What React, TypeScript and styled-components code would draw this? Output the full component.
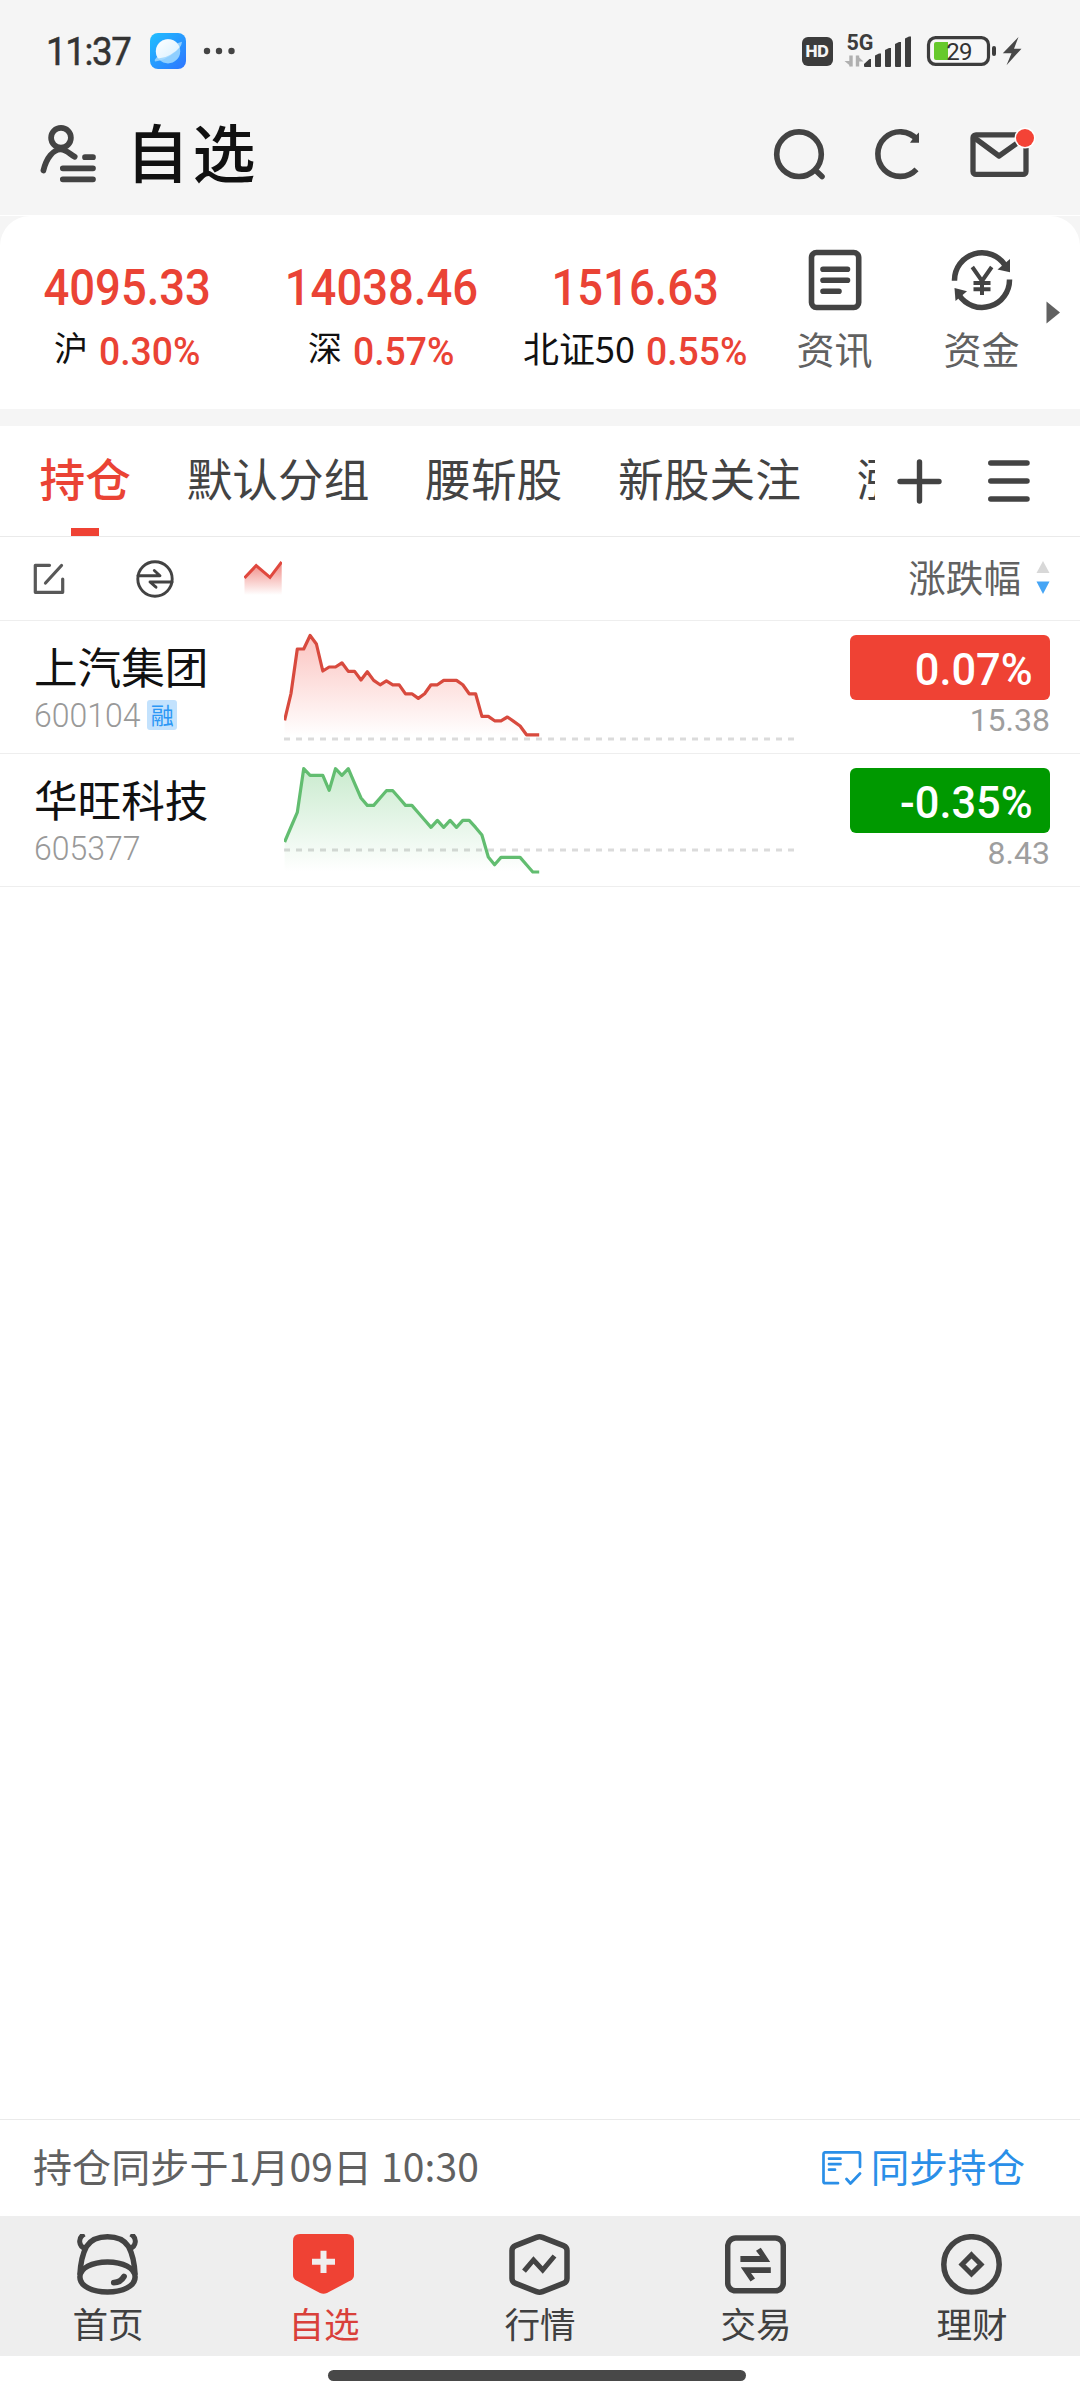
import React from 'react';
import styled, { createGlobalStyle } from 'styled-components';

const RED = '#ea4335';
const INK = '#434343';

const Global = createGlobalStyle`
  html, body { margin: 0; padding: 0; background: #fff; }
  *, *::before, *::after { box-sizing: border-box; }
  svg { display: block; flex: none; }
`;

const zh = `'Noto Sans CJK SC', sans-serif`;
const din = `Roboto, 'Noto Sans CJK SC', sans-serif`;

const Screen = styled.div`
  width: 1080px;
  height: 2400px;
  display: flex;
  flex-direction: column;
  background: #fff;
  overflow: hidden;
  font-family: ${zh};
  color: #111;
  white-space: nowrap;
`;

const Num = styled.span<{ $size: number; $scale?: number; $weight?: number; $origin?: string }>`
  display: inline-block;
  font-family: ${din};
  font-size: ${p => p.$size}px;
  font-weight: ${p => p.$weight ?? 500};
  transform: scaleX(${p => p.$scale ?? 1});
  transform-origin: ${p => p.$origin ?? 'center'};
`;

/* ---------- status bar ---------- */

const StatusBar = styled.div`
  height: 102px;
  flex: none;
  display: flex;
  align-items: center;
  justify-content: space-between;
  padding: 0 56.5px 0 46px;
  background: #f5f5f5;
`;

const StatusLeft = styled.div`
  display: flex;
  align-items: center;
`;

const Clock = styled.div`
  width: 104px;
  font: 400 39.5px/50px ${din};
  letter-spacing: -1.5px;
  color: #333;
  -webkit-text-stroke: 0.5px #333;
  padding-top: 1px;
  span { display: inline-block; transform: scaleX(0.93); transform-origin: left; }
`;

const HdBadge = styled.div`
  width: 31px;
  height: 29px;
  border-radius: 6px;
  background: #3c3c3c;
  color: #f5f5f5;
  display: flex;
  align-items: center;
  justify-content: center;
  font: 800 16px/29px Inter, sans-serif;
  letter-spacing: -0.3px;
`;

const StatusRight = styled.div`
  display: flex;
  align-items: center;
`;

/* ---------- header ---------- */

const Header = styled.header`
  height: 113px;
  flex: none;
  display: flex;
  align-items: center;
  padding: 0 40px 9px;
  background: #f5f5f5;
`;

const Title = styled.h1`
  flex: 1;
  margin: 0 0 8px 28px;
  font: 500 63px/90px ${zh};
  letter-spacing: 3.5px;
`;

const HeaderActions = styled.div`
  display: flex;
  align-items: center;
`;

/* ---------- index card ---------- */

const CardArea = styled.section`
  flex: none;
  border-top: 1px solid #fff;
  background: #f5f5f5;
  padding-bottom: 17px;
`;

const Card = styled.div`
  height: 193px;
  border-radius: 30px 30px 0 0;
  background: #fff;
  display: flex;
`;

const IndexCell = styled.div`
  width: 254px;
  padding-top: 47px;
  display: flex;
  flex-direction: column;
  align-items: center;
  color: ${RED};
`;

const IndexValue = styled.div`
  height: 50px;
  line-height: 50px;
`;

const IndexMeta = styled.div`
  height: 40px;
  margin-top: 19px;
  padding-left: 1px;
  display: flex;
  align-items: center;
  gap: 9.5px;
  line-height: 40px;
`;

const IndexName = styled.span<{ $size?: number }>`
  font-size: ${p => p.$size ?? 34}px;
  color: #111;
  margin-bottom: 11px;
`;

const QuickLink = styled.div`
  width: 147px;
  padding: 33px 2px 0 0;
  display: flex;
  flex-direction: column;
  align-items: center;
  font-size: 38px;
  line-height: 40px;
  color: #616161;
  gap: 17px;
`;

const MoreArrow = styled.div`
  margin: 85px 0 0 -10px;
`;

/* ---------- tabs ---------- */

const TabBar = styled.nav`
  height: 111px;
  flex: none;
  border-bottom: 1px solid #eaeaea;
  display: flex;
`;

const TabStrip = styled.div`
  width: 875px;
  flex: none;
  display: flex;
  gap: 55.8px;
  padding-left: 39.5px;
  overflow: hidden;
`;

const Tab = styled.div<{ $active?: boolean }>`
  flex: none;
  display: flex;
  flex-direction: column;
  align-items: center;
  font-size: 45.7px;
  font-weight: ${p => (p.$active ? 500 : 400)};
  line-height: 102px;
  color: ${p => (p.$active ? RED : INK)};
  &::after {
    content: '';
    width: 28px;
    height: 8px;
    background: ${p => (p.$active ? '#ef4234' : 'transparent')};
  }
`;

const TabTools = styled.div`
  display: flex;
  align-items: center;
  gap: 46px;
  padding-left: 22px;
`;

/* ---------- toolbar ---------- */

const Toolbar = styled.div`
  height: 84px;
  flex: none;
  border-bottom: 1px solid #eee;
  display: flex;
  align-items: center;
  padding: 0 30px 0 33px;
`;

const SortLabel = styled.div`
  margin: 0 15px 6px auto;
  font-size: 37.6px;
  line-height: 50px;
  color: #616161;
`;

/* ---------- stock rows ---------- */

const StockRow = styled.div`
  height: 133px;
  flex: none;
  border-bottom: 1px solid #eee;
  display: flex;
`;

const StockInfo = styled.div`
  width: 284px;
  padding: 17px 0 0 34px;
`;

const StockName = styled.div`
  font-size: 43.6px;
  line-height: 54px;
`;

const StockCode = styled.div`
  display: flex;
  align-items: center;
  height: 30px;
  line-height: 30px;
  margin-top: 8px;
  color: #999;
`;

const MarginTag = styled.span`
  width: 30px;
  height: 30px;
  border-radius: 3px;
  background: #c3e2fd;
  color: #2b97f5;
  font-size: 23px;
  line-height: 28px;
  text-align: center;
`;

const ChartCell = styled.div`
  width: 566px;
`;

const QuoteCell = styled.div`
  width: 200px;
  padding-top: 14px;
`;

const ChangeChip = styled.div<{ $down?: boolean }>`
  height: 65px;
  border-radius: 6px;
  background: ${p => (p.$down ? '#009900' : '#ef4234')};
  color: #fff;
  text-align: right;
  padding-right: 17px;
  line-height: 71px;
`;

const Price = styled.div`
  margin-top: 5px;
  text-align: right;
  line-height: 30px;
  color: #9e9e9e;
`;

const Blank = styled.div`
  flex: 1;
`;

/* ---------- sync bar & bottom navigation ---------- */

const SyncBar = styled.div`
  height: 97px;
  flex: none;
  border-top: 1px solid #eaeaea;
  display: flex;
  align-items: center;
  justify-content: space-between;
  padding: 0 55px 0 33px;
  font-size: 39px;
  line-height: 60px;
  color: #616161;
`;

const SyncText = styled.span<{ $spacing?: number }>`
  margin-bottom: 6px;
  letter-spacing: ${p => p.$spacing ?? 0}px;
`;

const SyncLink = styled.div`
  display: flex;
  align-items: center;
  gap: 9px;
  font-size: 38.6px;
  color: #2a8fe8;
`;

const BottomNav = styled.nav`
  height: 140px;
  flex: none;
  display: flex;
  background: #eee;
`;

const NavItem = styled.div<{ $active?: boolean }>`
  flex: 1;
  padding-top: 18px;
  display: flex;
  flex-direction: column;
  align-items: center;
  gap: 7px;
  font-size: 35.6px;
  line-height: 42px;
  color: ${p => (p.$active ? '#d9403a' : '#404040')};
  svg { margin-right: 1.6px; }
`;

const GestureArea = styled.div`
  height: 44px;
  flex: none;
  display: flex;
  justify-content: center;
  padding-top: 14px;
`;

const GestureBar = styled.div`
  width: 418px;
  height: 11px;
  margin-right: 6px;
  border-radius: 6px;
  background: #484848;
`;

/* ---------- data ---------- */

const indices = [
  { value: '4095.33', name: '沪', pct: '0.30%', size: 34 },
  { value: '14038.46', name: '深', pct: '0.57%', size: 34 },
  { value: '1516.63', name: '北证50', pct: '0.55%', size: 36 },
];

const tabs = ['持仓', '默认分组', '腰斩股', '新股关注', '涨'];

const stocks = [
  {
    id: 'a', name: '上汽集团', code: '600104', tag: '融', pct: '0.07%', price: '15.38', down: false,
    line: '#d84a3e', fill: '#f9a09a', base: 118, bottom: 115,
    pts: [99.3, 72.5, 28, 28, 14.5, 23, 50, 46, 46, 41.8, 50.4, 50.4, 59, 50.8, 59.4, 63.8, 59.8, 63.8, 63.8, 72.8, 72.8, 77.4, 72.8, 63.8, 63.8, 59.4, 59.4, 59.4, 63.8, 72.8, 72.8, 95.4, 95.4, 99.8, 99.8, 96, 100.4, 105, 113.8, 113.8, 113.8],
  },
  {
    id: 'b', name: '华旺科技', code: '605377', tag: '', pct: '-0.35%', price: '8.43', down: true,
    line: '#62bd70', fill: '#aadfb2', base: 96, bottom: 118,
    pts: [88, 73, 58.4, 14.7, 21.4, 21.4, 21.4, 36.4, 14.7, 21.4, 14.7, 29.4, 44, 51.4, 51.4, 44, 36.7, 36.7, 44, 51.4, 51.4, 58.7, 66, 73.4, 66.4, 73.4, 66.4, 73.4, 66.4, 66.4, 73.4, 81, 103, 110.7, 103.4, 103.4, 103.4, 103.4, 110.7, 118, 118],
  },
];

type Stock = (typeof stocks)[number];

/* ---------- drawings ---------- */

const Sparkline = ({ s }: { s: Stock }) => {
  const pts = s.pts.map((y, i) => `${(0.6 + i * 6.365).toFixed(1)},${y}`).join(' ');
  return (
    <svg width="512" height="132" viewBox="0 0 512 132">
      <defs>
        <linearGradient id={`g-${s.id}`} gradientUnits="userSpaceOnUse" x1="0" y1="10" x2="0" y2={s.bottom}>
          <stop offset="0" stopColor={s.fill} stopOpacity="0.65" />
          <stop offset="1" stopColor={s.fill} stopOpacity="0" />
        </linearGradient>
      </defs>
      <path d={`M0.6 ${s.bottom} L${pts} L255 ${s.bottom} Z`} fill={`url(#g-${s.id})`} />
      <path d={`M0 ${s.base} H510`} stroke="#000" strokeOpacity="0.14" strokeWidth="3.2" strokeDasharray="6 6" />
      <polyline points={pts} fill="none" stroke={s.line} strokeWidth="3.2" strokeLinejoin="round" />
    </svg>
  );
};

const BrowserIcon = () => (
  <svg width="36" height="36" viewBox="0 0 36 36">
    <defs>
      <linearGradient id="appbg" x1="0" y1="0" x2="1" y2="1">
        <stop offset="0" stopColor="#20c0ff" />
        <stop offset="1" stopColor="#2e74ff" />
      </linearGradient>
      <linearGradient id="planet" x1="0" y1="0" x2="1" y2="1">
        <stop offset="0" stopColor="#fff" />
        <stop offset="1" stopColor="#d8f0ff" />
      </linearGradient>
    </defs>
    <rect width="36" height="36" rx="8" fill="url(#appbg)" />
    <circle cx="18" cy="18.200" r="12.200" fill="#8fcfff" />
    <path d="M6.500 24.500L28 10L32 8.800Q31.500 14.500 24.500 19.500Q15 27.500 5 28.500Q4.300 26.500 6.500 24.500Z" fill="#a9dcff" opacity="0.8" />
    <path d="M8 25.200A12.200 12.200 0 1 1 29.600 14.300Q26.500 18.500 20 22Q13.500 25.800 8 25.200Z" fill="url(#planet)" />
  </svg>
);

const MoreDots = () => (
  <svg width="34" height="10" viewBox="0 0 34 10" style={{ marginLeft: 16 }}>
    <circle cx="5" cy="5" r="3.200" fill="#444" />
    <circle cx="17" cy="5" r="3.200" fill="#444" />
    <circle cx="29.500" cy="5" r="3.200" fill="#444" />
  </svg>
);

const SignalIcon = () => (
  <svg width="80" height="36" viewBox="0 0 80 36">
    <text x="13.500" y="17" fontFamily="Roboto, sans-serif" fontWeight="700" fontSize="21.500" fill="#3d3d3d">5G</text>
    <path d="M18 22.500V33.500M24.500 22.500V33.500" stroke="#b0b0b0" strokeWidth="3.400" />
    <path d="M11.500 28H18V33.500ZM30.500 28.500H24V22.500Z" fill="#b0b0b0" />
    <g fill="#3d3d3d">
      <path d="M31 33V31L36.500 26H38V34H32Q31 34 31 33Z" />
      <path d="M42 33V22.500L46 20.500H48V33Q48 34 47 34H43Q42 34 42 33Z" />
      <path d="M52 33V17L56 15H58V33Q58 34 57 34H53Q52 34 52 33Z" />
      <path d="M62 33V11L66 9H68V33Q68 34 67 34H63Q62 34 62 33Z" />
      <path d="M72 33V5.500L76 3.500H78V33Q78 34 77 34H73Q72 34 72 33Z" />
    </g>
  </svg>
);

const BatteryIcon = () => (
  <svg width="98" height="32" viewBox="0 0 98 32" style={{ marginLeft: 13 }}>
    <rect x="2.500" y="2.700" width="60" height="26.600" rx="7" fill="#f7f7f7" stroke="#3d3d3d" strokeWidth="3.200" />
    <path d="M10 7H22V25H10Q8 25 8 23V9Q8 7 10 7Z" fill="#66c92c" />
    <text x="33" y="25" textAnchor="middle" fontFamily="Roboto, sans-serif" fontSize="24" letterSpacing="-0.8" fill="#333">29</text>
    <rect x="66" y="11" width="4" height="10" rx="2" fill="#3d3d3d" />
    <path d="M92.500 2L76.800 18.300H85.500L80.500 30.300L95.500 13.700H88Z" fill="#484848" />
  </svg>
);

const ProfileIcon = () => (
  <svg width="58" height="62" viewBox="0 0 58 62" fill="none" stroke={INK} strokeWidth="5.700" strokeLinecap="round" strokeLinejoin="round">
    <circle cx="21" cy="14.800" r="9.900" />
    <path d="M3.400 47.500C6.500 34.500 13.500 26.500 20.500 26.500C26 26.500 28.500 30 34.700 33.800" />
    <path d="M45 34.200H53M22.800 45.300H53M22.800 56.300H53" />
  </svg>
);

const SearchIcon = () => (
  <svg width="54" height="54" viewBox="0 0 54 54" fill="none" stroke={INK} strokeWidth="5.600" strokeLinecap="round">
    <circle cx="27" cy="27.200" r="22.300" />
    <path d="M44 43.800L50 49.500" />
  </svg>
);

const RefreshIcon = () => (
  <svg width="54" height="54" viewBox="0 0 54 54" style={{ marginLeft: 47 }}>
    <path d="M44 12.500A22.300 22.300 0 1 0 43.500 42.300" fill="none" stroke={INK} strokeWidth="5.600" />
    <path d="M46 5.500V15.700H37L41 10Z" fill={INK} />
  </svg>
);

const MailIcon = () => (
  <svg width="72" height="54" viewBox="0 0 72 54" style={{ marginLeft: 41 }}>
    <g fill="none" stroke={INK} strokeWidth="5.300" strokeLinejoin="round">
      <rect x="5" y="7.800" width="53" height="39.600" rx="3" />
      <path d="M6 10.500L31 29L57 10.500" />
    </g>
    <circle cx="57" cy="11" r="10.500" fill="#fff" />
    <circle cx="57" cy="11" r="9" fill="#f44336" />
  </svg>
);

const NewsIcon = () => (
  <svg width="62" height="62" viewBox="0 0 62 62" fill="none" stroke={INK} strokeWidth="5.600" strokeLinecap="round">
    <rect x="7.500" y="3.500" width="47.200" height="55" rx="5" />
    <path d="M19 20.300H43.500M19 31.300H43.500M19 42.300H35" />
  </svg>
);

const FundIcon = () => (
  <svg width="62" height="62" viewBox="0 0 62 62">
    <g fill="none" stroke={INK} strokeWidth="5.500">
      <path d="M3.500 31.800A27.500 27.500 0 0 1 54.500 17" />
      <path d="M58.500 30.500A27.500 27.500 0 0 1 8 46" />
    </g>
    <path d="M59 10V23.300L46.500 20.500Z" fill={INK} />
    <path d="M3.500 39L16 42.300L4.500 52Z" fill={INK} />
    <path d="M21.300 18L31 32L40.700 18M31 31V46M22.500 34H39.500M22.500 40.200H39.500" fill="none" stroke={INK} strokeWidth="4" />
  </svg>
);

const EditIcon = () => (
  <svg width="32" height="32" viewBox="0 0 32 32" fill="none" stroke="#585858" strokeWidth="3.200" strokeLinecap="round" strokeLinejoin="round">
    <path d="M16.500 2.300H2.300V29.300H29.700V16M28.500 2.500L12.500 20" />
  </svg>
);

const SwapIcon = () => (
  <svg width="38" height="38" viewBox="0 0 38 38" style={{ marginLeft: 71 }} fill="none" stroke={INK} strokeWidth="2.900" strokeLinejoin="round" strokeLinecap="round">
    <circle cx="19" cy="19" r="17.200" />
    <path d="M2 15.700H24L18.300 10.500M36 22H14L20 27.200" />
  </svg>
);

const TrendIcon = () => (
  <svg width="38" height="36" viewBox="0 0 38 36" style={{ marginLeft: 70 }}>
    <defs>
      <linearGradient id="trend" x1="0" y1="0" x2="0" y2="1">
        <stop offset="0" stopColor="#f08680" />
        <stop offset="1" stopColor="#f08680" stopOpacity="0" />
      </linearGradient>
    </defs>
    <path d="M0.500 17L12.200 4.500L26 16.300L37.700 1V34H0.500Z" fill="url(#trend)" />
    <path d="M0.500 17L12.200 4.500L26 16.300L37.700 1" fill="none" stroke="#e0483e" strokeWidth="3" />
  </svg>
);

const navIcons = [
  <g key="home" fill="none" stroke={INK} strokeWidth="5.500">
    <path d="M7.300 0C0.500 4 1.500 12.500 8.500 14.700M53.700 0C60.500 4 59.500 12.500 52.500 14.700" strokeWidth="5" />
    <path d="M2.900 41C3.500 28 6.500 18 9.500 12.500C18 -0.400 43 -0.400 51.500 12.500C54.500 18 57.500 28 58.100 41" />
    <path d="M2.900 43C2.900 34 15 27.900 30.500 27.900S58.100 34 58.100 43C58.100 52 46 58 30.500 58S2.900 52 2.900 43Z" />
    <path d="M36.800 48.600Q43.500 48.600 47 42.500" strokeWidth="5.800" strokeLinecap="round" />
  </g>,
  <g key="watch">
    <path d="M7 0H54Q61 0 61 7V41Q61 44.500 58 46.300L34 59Q30.500 60.600 27 59L3 46.300Q0 44.500 0 41V7Q0 0 7 0Z" fill="#ef4234" />
    <path d="M30.500 16.700V39M19 27.800H42" stroke="#f0eeee" strokeWidth="6" />
  </g>,
  <g key="market" fill="none" stroke={INK} strokeWidth="5.500" strokeLinejoin="round">
    <path d="M27.500 3.400Q30.500 2.200 33.500 3.400L54.500 11.600Q58 13 58 16.500V44.500Q58 48 54.500 49.400L33.500 57.600Q30.500 58.800 27.500 57.600L6.500 49.400Q3 48 3 44.500V16.500Q3 13 6.500 11.600Z" />
    <path d="M15 37.200L24.500 26L33.700 36L45.500 22" strokeWidth="5" strokeLinejoin="miter" />
  </g>,
  <g key="trade">
    <rect x="2.700" y="4" width="55.600" height="52.800" rx="8" fill="none" stroke={INK} strokeWidth="5.500" />
    <path d="M15.400 22H35L31 16.700L35.800 13.700L45.200 28H15.400ZM45.800 39H26L30 44.500L25.500 47.500L15.800 33.300H45.800Z" fill={INK} />
  </g>,
  <g key="wealth" fill="none" stroke={INK}>
    <circle cx="30.500" cy="30.400" r="27.700" strokeWidth="5.500" />
    <path d="M30.500 20.900L40 30.400L30.500 39.900L21 30.400Z" strokeWidth="5" />
  </g>,
];

const navLabels = ['首页', '自选', '行情', '交易', '理财'];

/* ---------- page ---------- */

export default function App() {
  return (
    <Screen>
      <Global />
      <StatusBar>
        <StatusLeft>
          <Clock><span>11:37</span></Clock>
          <BrowserIcon />
          <MoreDots />
        </StatusLeft>
        <StatusRight>
          <HdBadge>HD</HdBadge>
          <SignalIcon />
          <BatteryIcon />
        </StatusRight>
      </StatusBar>

      <Header>
        <ProfileIcon />
        <Title>自选</Title>
        <HeaderActions>
          <SearchIcon />
          <RefreshIcon />
          <MailIcon />
        </HeaderActions>
      </Header>

      <CardArea>
        <Card>
          {indices.map(it => (
            <IndexCell key={it.name}>
              <IndexValue><Num $size={50} $scale={0.908}>{it.value}</Num></IndexValue>
              <IndexMeta>
                <IndexName $size={it.size}>{it.name}</IndexName>
                <Num $size={38} $scale={0.98}>{it.pct}</Num>
              </IndexMeta>
            </IndexCell>
          ))}
          <QuickLink><NewsIcon />资讯</QuickLink>
          <QuickLink><FundIcon />资金</QuickLink>
          <MoreArrow>
            <svg width="14" height="23" viewBox="0 0 14 23"><path d="M0.500 0.500L14 11.500L0.500 22.500Z" fill="#616161" /></svg>
          </MoreArrow>
        </Card>
      </CardArea>

      <TabBar>
        <TabStrip>
          {tabs.map((t, i) => <Tab key={t} $active={i === 0}>{t}</Tab>)}
        </TabStrip>
        <TabTools>
          <svg width="45" height="45" viewBox="0 0 45 45" stroke={INK} strokeWidth="5.400" strokeLinecap="round">
            <path d="M22.500 3V42M3 22.500H42" />
          </svg>
          <svg width="42" height="42" viewBox="0 0 42 42" stroke={INK} strokeWidth="5.500" strokeLinecap="round">
            <path d="M2.800 3H39M2.800 21H39M2.800 39H39" />
          </svg>
        </TabTools>
      </TabBar>

      <Toolbar>
        <EditIcon />
        <SwapIcon />
        <TrendIcon />
        <SortLabel>涨跌幅</SortLabel>
        <svg width="14" height="36" viewBox="0 0 14 36">
          <path d="M7 0L13.500 12H0.500Z" fill="#d8d8d8" />
          <path d="M7 33L13.500 20.500H0.500Z" fill="#46a5f5" />
        </svg>
      </Toolbar>

      {stocks.map(s => (
        <StockRow key={s.id}>
          <StockInfo>
            <StockName>{s.name}</StockName>
            <StockCode>
              <Num $size={34} $weight={300} $scale={0.94} $origin="left">{s.code}</Num>
              {s.tag && <MarginTag>{s.tag}</MarginTag>}
            </StockCode>
          </StockInfo>
          <ChartCell><Sparkline s={s} /></ChartCell>
          <QuoteCell>
            <ChangeChip $down={s.down}><Num $size={44} $scale={0.985} $origin="right">{s.pct}</Num></ChangeChip>
            <Price><Num $size={32} $scale={1} $origin="right" $weight={450}>{s.price}</Num></Price>
          </QuoteCell>
        </StockRow>
      ))}

      <Blank />

      <SyncBar>
        <SyncText $spacing={0.12}>持仓同步于1月09日 10:30</SyncText>
        <SyncLink>
          <svg width="40" height="34" viewBox="0 0 40 34" fill="none" stroke="#2a8fe8" strokeWidth="2.700" strokeLinecap="round" strokeLinejoin="round">
            <path d="M16 32.200H3.300Q1.500 32.200 1.500 30.400V3Q1.500 1.300 3.300 1.300H36Q38 1.300 38 3.300V16M7 7.700H18.500M7 13.200H18.500M7 18.700H13M24.500 28L28.500 32.500L38 22.500" />
          </svg>
          <SyncText>同步持仓</SyncText>
        </SyncLink>
      </SyncBar>

      <BottomNav>
        {navLabels.map((label, i) => (
          <NavItem key={label} $active={i === 1}>
            <svg width="61" height="61" viewBox="0 0 61 61">{navIcons[i]}</svg>
            {label}
          </NavItem>
        ))}
      </BottomNav>
      <GestureArea><GestureBar /></GestureArea>
    </Screen>
  );
}
